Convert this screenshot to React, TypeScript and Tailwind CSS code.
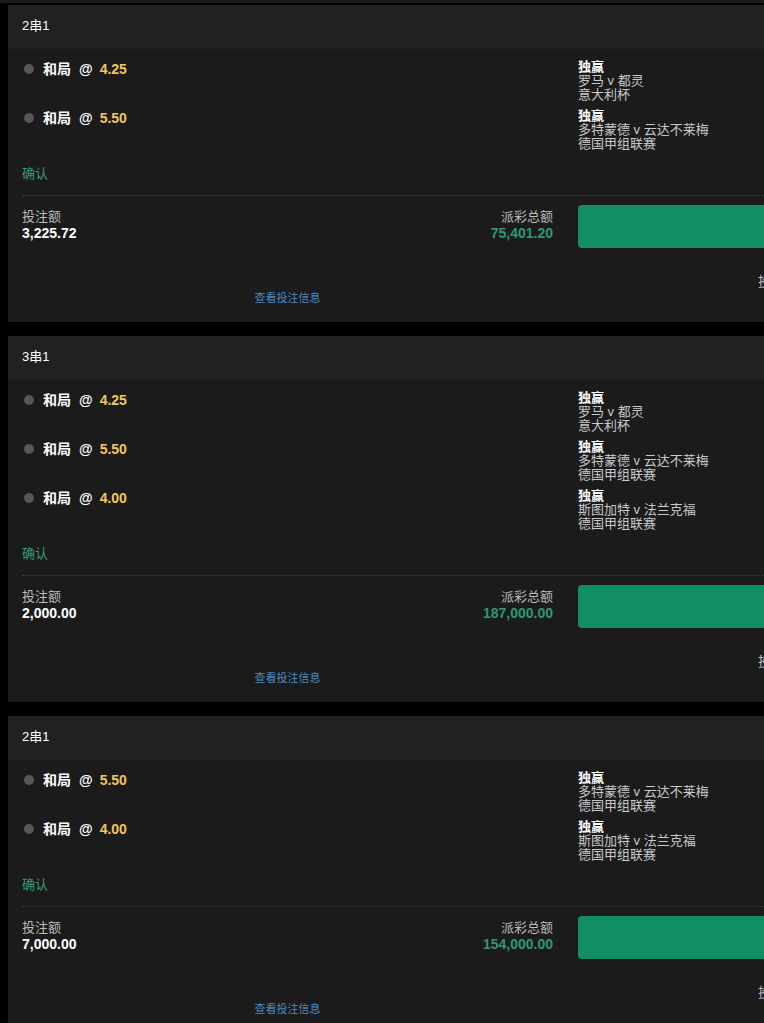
import React from "react";

type Leg = { odds: string; match: string; league: string };
type Bet = { title: string; legs: Leg[]; stake: string; payout: string };

const bets: Bet[] = [
  {
    title: "2串1",
    legs: [
      { odds: "4.25", match: "罗马 v 都灵", league: "意大利杯" },
      { odds: "5.50", match: "多特蒙德 v 云达不莱梅", league: "德国甲组联赛" },
    ],
    stake: "3,225.72",
    payout: "75,401.20",
  },
  {
    title: "3串1",
    legs: [
      { odds: "4.25", match: "罗马 v 都灵", league: "意大利杯" },
      { odds: "5.50", match: "多特蒙德 v 云达不莱梅", league: "德国甲组联赛" },
      { odds: "4.00", match: "斯图加特 v 法兰克福", league: "德国甲组联赛" },
    ],
    stake: "2,000.00",
    payout: "187,000.00",
  },
  {
    title: "2串1",
    legs: [
      { odds: "5.50", match: "多特蒙德 v 云达不莱梅", league: "德国甲组联赛" },
      { odds: "4.00", match: "斯图加特 v 法兰克福", league: "德国甲组联赛" },
    ],
    stake: "7,000.00",
    payout: "154,000.00",
  },
];

const font = {
  fontFamily: '"Liberation Sans", Arial, "Noto Sans CJK SC", sans-serif',
};

const BetCard = ({ bet }: { bet: Bet }) => {
  return (
    <section className="w-[1000px] bg-[#1b1b1b]">
      {/* header */}
      <header className="h-[44px] flex items-center pb-[3px] px-[14px] bg-[#212121] text-[13px] text-white">
        {bet.title}
      </header>

      <div className="px-[14px] pt-[11px]">
        {/* selections */}
        <div className="flex flex-col gap-[7px]">
          {bet.legs.map((leg, i) => (
            <div key={i} className="flex">
              <div className="w-[556px] flex items-center h-[18px] text-[14px] font-bold leading-[18px]">
                <span className="ml-[2px] mr-[9px] w-[10px] h-[10px] rounded-full bg-[#575757]" />
                <span className="text-white">和局</span>
                <span className="text-white ml-[8px]">@</span>
                <span className="text-[#f2c75c] ml-[7px]">{leg.odds}</span>
              </div>
              <div className="flex flex-col text-[13px] leading-[14px]">
                <span className="text-white font-bold">独赢</span>
                <span className="text-[#c9c9c9]">{leg.match}</span>
                <span className="text-[#c9c9c9]">{leg.league}</span>
              </div>
            </div>
          ))}
        </div>

        <div className="mt-[15px] text-[13px] leading-[16px] text-[#3a9c72]">确认</div>

        <div className="mt-[13px] border-t border-dotted border-[#3c3c3c]" />

        {/* stake / payout */}
        <div className="flex">
          <div className="w-[556px] pr-[25px] pt-[13px] flex flex-col">
            <div className="flex justify-between">
              <div className="flex flex-col">
                <span className="text-[13px] leading-[16px] text-[#bdbdbd]">投注额</span>
                <span className="text-[14px] leading-[16px] font-bold text-white">{bet.stake}</span>
              </div>
              <div className="flex flex-col items-end">
                <span className="text-[13px] leading-[16px] text-[#bdbdbd]">派彩总额</span>
                <span className="text-[14px] leading-[16px] font-bold text-[#2f9870]">{bet.payout}</span>
              </div>
            </div>
            <a className="mt-[50px] pb-[17px] self-center text-[11px] leading-[14px] text-[#4a8bc4] cursor-pointer">
              查看投注信息
            </a>
          </div>
          <div className="flex flex-col">
            <button
              type="button"
              className="mt-[9px] w-[300px] h-[43px] rounded-[4px] bg-[#118e62]"
            />
            <span className="mt-[26px] ml-[180px] text-[13px] leading-[16px] text-[#bdbdbd]">
              投注已确认
            </span>
          </div>
        </div>
      </div>
    </section>
  );
};

const App = () => {
  return (
    <div className="w-[764px] h-[1023px] overflow-hidden bg-black" style={font}>
      <div className="h-[3px] bg-[#1b1b1b]" />
      <div className="ml-2 mt-[2px] flex flex-col gap-[14px]">
        {bets.map((bet, i) => (
          <BetCard key={i} bet={bet} />
        ))}
      </div>
    </div>
  );
};

export default App;
